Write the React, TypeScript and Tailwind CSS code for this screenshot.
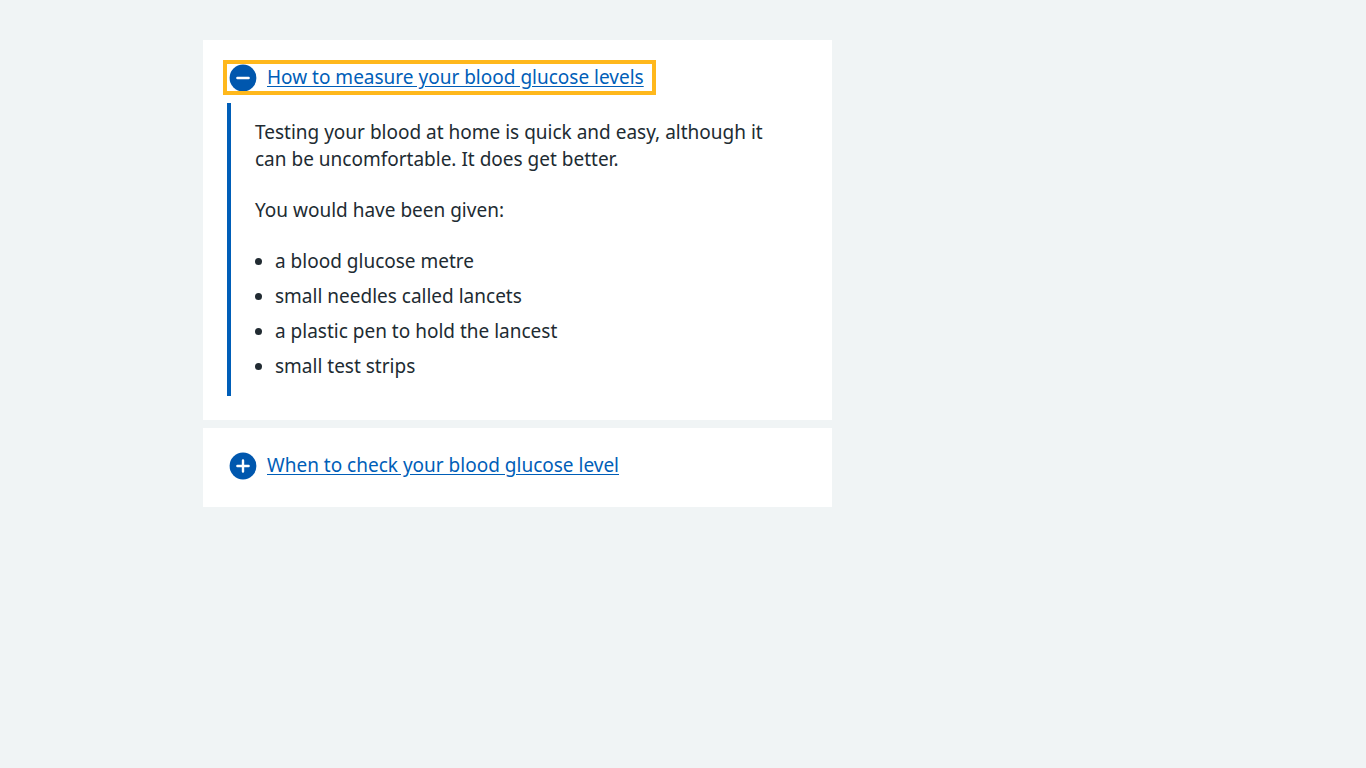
import React, { useState } from "react";

type PanelProps = {
  id: string;
  title: string;
  initiallyOpen?: boolean;
  children: React.ReactNode;
};

function ToggleIcon({ open }: { open: boolean }) {
  return (
    <svg aria-hidden="true" viewBox="0 0 32 32" className="size-8 shrink-0">
      <circle cx="16" cy="16" r="13.4" fill="#0057ae" />
      <path
        d={open ? "M10.4 16h11.2" : "M10.4 16h11.2M16 10.4v11.2"}
        fill="none"
        stroke="#fff"
        strokeWidth="2.4"
        strokeLinecap="round"
      />
    </svg>
  );
}

function Panel({ id, title, initiallyOpen = false, children }: PanelProps) {
  const [open, setOpen] = useState(initiallyOpen);
  return (
    <section className="bg-white p-6">
      <h2 className={open ? "flex" : "flex pb-1"}>
        <button
          type="button"
          aria-expanded={open}
          aria-controls={id}
          onClick={() => setOpen(!open)}
          className={`flex h-[27px] items-center gap-2 pr-2 text-left text-[#005eb8] ${
            open ? "outline-4 outline-[#ffb81c]" : "outline-none"
          }`}
        >
          <ToggleIcon open={open} />
          <span className="underline underline-offset-2">{title}</span>
        </button>
      </h2>
      <div id={id} hidden={!open} className="mt-3 border-l-4 border-[#005eb8] py-4 pr-6 pl-6">
        {children}
      </div>
    </section>
  );
}

const supplies = [
  "a blood glucose metre",
  "small needles called lancets",
  "a plastic pen to hold the lancest",
  "small test strips",
];

export default function App() {
  return (
    <div className="min-h-screen bg-[#f0f4f5] px-4 py-10 font-['Noto_Sans','Open_Sans',sans-serif] text-[19px] leading-[27px] text-[#212b32]">
      <main className="mx-auto max-w-[960px]">
        <div className="flex max-w-[629px] flex-col gap-2">
          <Panel id="measure" title="How to measure your blood glucose levels" initiallyOpen>
            <p className="mb-6">
              Testing your blood at home is quick and easy, although it can be uncomfortable. It does get better.
            </p>
            <p className="mb-6">You would have been given:</p>
            <ul className="flex list-disc flex-col gap-2 pl-5">
              {supplies.map((item) => (
                <li key={item}>{item}</li>
              ))}
            </ul>
          </Panel>
          <Panel id="when" title="When to check your blood glucose level">
            <p>Your care team will tell you when to check your level.</p>
          </Panel>
        </div>
      </main>
    </div>
  );
}
